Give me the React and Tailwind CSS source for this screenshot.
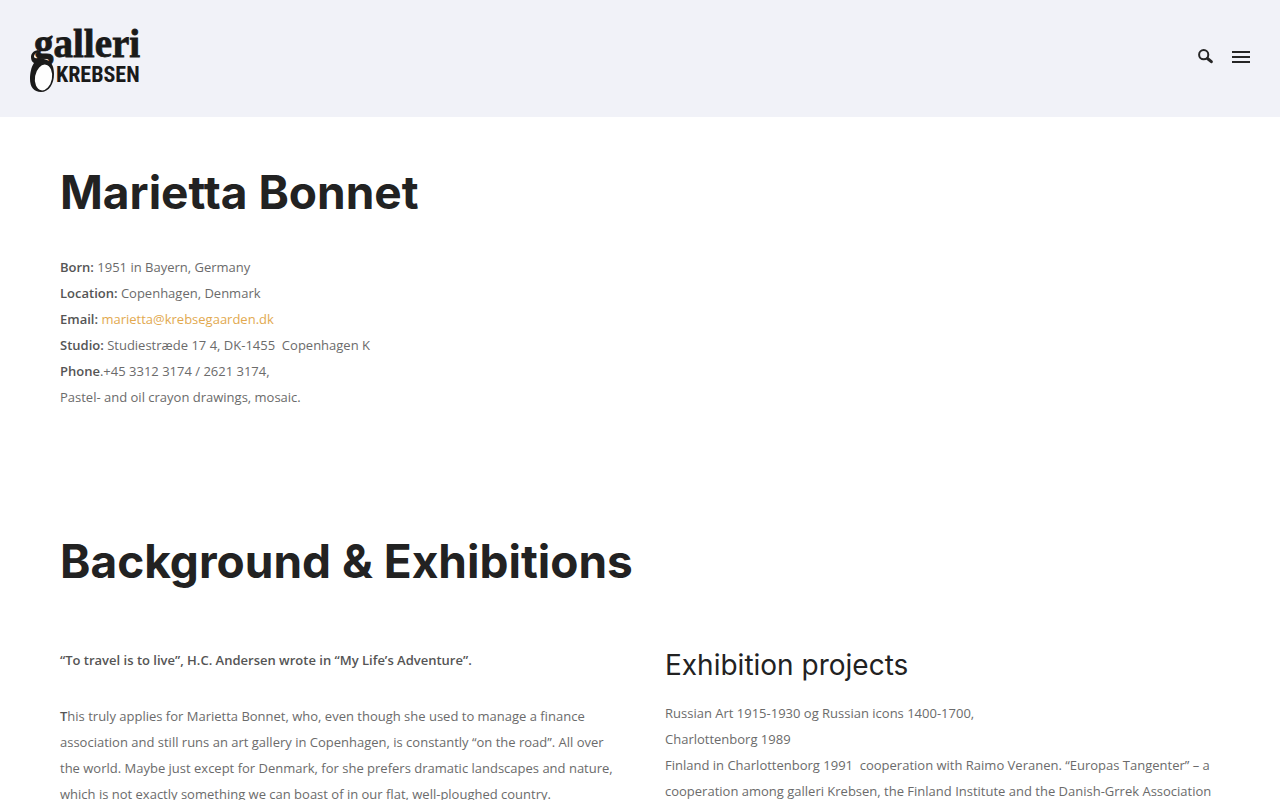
import React from 'react';

const Logo = () => (
  <svg width="116" height="67" viewBox="0 0 116 67" fill="#1a1a1a" className="overflow-visible" role="img" aria-label="galleri Krebsen">
    <text x="4" y="32" fontSize="39" fontWeight="700" fontFamily="'Liberation Serif', serif" stroke="#1a1a1a" strokeWidth="0.8">
      galleri
    </text>
    {/* long tail of the g with its filled bowl */}
    <path d="M8 25C3 26 1 29 1 32c0 3 1 5 3 6C1 42 0 49 0 54c0 8 4 13 11 13 8 0 13-8 13-18 0-7-2-12-7-14-4-2-9-1-12-2-2-1-1-5 4-6z" />
    <ellipse cx="13.5" cy="52.5" rx="8.5" ry="13" fill="#fefefe" transform="rotate(10 13.5 52.5)" />
    <text x="26" y="57" fontSize="22" fontWeight="700" fontFamily="'Roboto Condensed', Roboto, sans-serif">
      KREBSEN
    </text>
  </svg>
);

const SearchIcon = () => (
  <svg width="15" height="15" viewBox="0 0 15 15" fill="none" stroke="#262626" aria-hidden="true">
    <circle cx="5.7" cy="5.7" r="4.6" strokeWidth="2" />
    <path d="M9.5 9.5l3.8 3.2" strokeWidth="3" strokeLinecap="round" />
  </svg>
);

const details = [
  { label: 'Born:', value: ' 1951 in Bayern, Germany' },
  { label: 'Location:', value: ' Copenhagen, Denmark' },
  { label: 'Email:', email: 'marietta@krebsegaarden.dk' },
  { label: 'Studio:', value: ' Studiestræde 17 4, DK-1455 \u00a0Copenhagen K' },
  { label: 'Phone', value: '.+45 3312 3174 / 2621 3174,' },
  { value: 'Pastel- and oil crayon drawings, mosaic.' },
];

const App = () => {
  return (
    <div className="bg-white font-['Open_Sans',sans-serif] text-[13px] leading-[26px] text-[#6b6b6b]">
      <header className="flex items-center justify-between bg-[#f1f2f8] px-[30px] py-[25px]">
        <a href="#home">
          <Logo />
        </a>
        <div className="mb-1 flex items-center gap-[19px]">
          <button type="button" aria-label="Search">
            <SearchIcon />
          </button>
          <button type="button" aria-label="Menu" className="flex w-[18px] flex-col gap-[3px]">
            <span className="h-[2px] w-full bg-[#262626]" />
            <span className="h-[2px] w-full bg-[#262626]" />
            <span className="h-[2px] w-full bg-[#262626]" />
          </button>
        </div>
      </header>

      <main className="px-[60px] pt-[50px]">
        {/* Artist details */}
        <section className="mb-[126px]">
          <h1 className="mb-[35px] font-['Inter',sans-serif] text-[46px] font-bold leading-[50px] pb-[2px] text-[#222]">
            Marietta Bonnet
          </h1>
          {details.map(({ label, value, email }) => (
            <p key={label || value}>
              {label && <strong className="font-semibold text-[#555]">{label}</strong>}
              {value}
              {email && <> <a href={`mailto:${email}`} className="text-[#e2a94f]">{email}</a></>}
            </p>
          ))}
        </section>

        {/* Background and exhibitions */}
        <section>
          <h2 className="mb-[59px] font-['Inter',sans-serif] text-[46px] font-bold leading-[50px] pb-[2px] text-[#222]">
            Background &amp; Exhibitions
          </h2>
          <div className="grid grid-cols-2 gap-[50px]">
            <div>
              <p className="mb-[30px] font-semibold text-[#555]">
                “To travel is to live”, H.C. Andersen wrote in “My Life’s Adventure”.
              </p>
              <p>
                <strong className="font-semibold text-[#555]">T</strong>his truly applies for Marietta Bonnet, who, even
                though she used to manage a finance association and still runs an art gallery in Copenhagen, is
                constantly “on the road”. All over the world. Maybe just except for Denmark, for she prefers dramatic
                landscapes and nature, which is not exactly something we can boast of in our flat, well-ploughed country.
              </p>
            </div>
            <div>
              <h3 className="mb-[17px] font-['Inter',sans-serif] text-[28px] leading-[36px] text-[#222]">
                Exhibition projects
              </h3>
              <p>Russian Art 1915-1930 og Russian icons 1400-1700,</p>
              <p>Charlottenborg 1989</p>
              <p>
                Finland in Charlottenborg 1991 &nbsp;cooperation with Raimo Veranen. “Europas Tangenter” – a cooperation
                among galleri Krebsen, the Finland Institute and the Danish-Grrek Association
              </p>
            </div>
          </div>
        </section>
      </main>
    </div>
  );
};

export default App;
